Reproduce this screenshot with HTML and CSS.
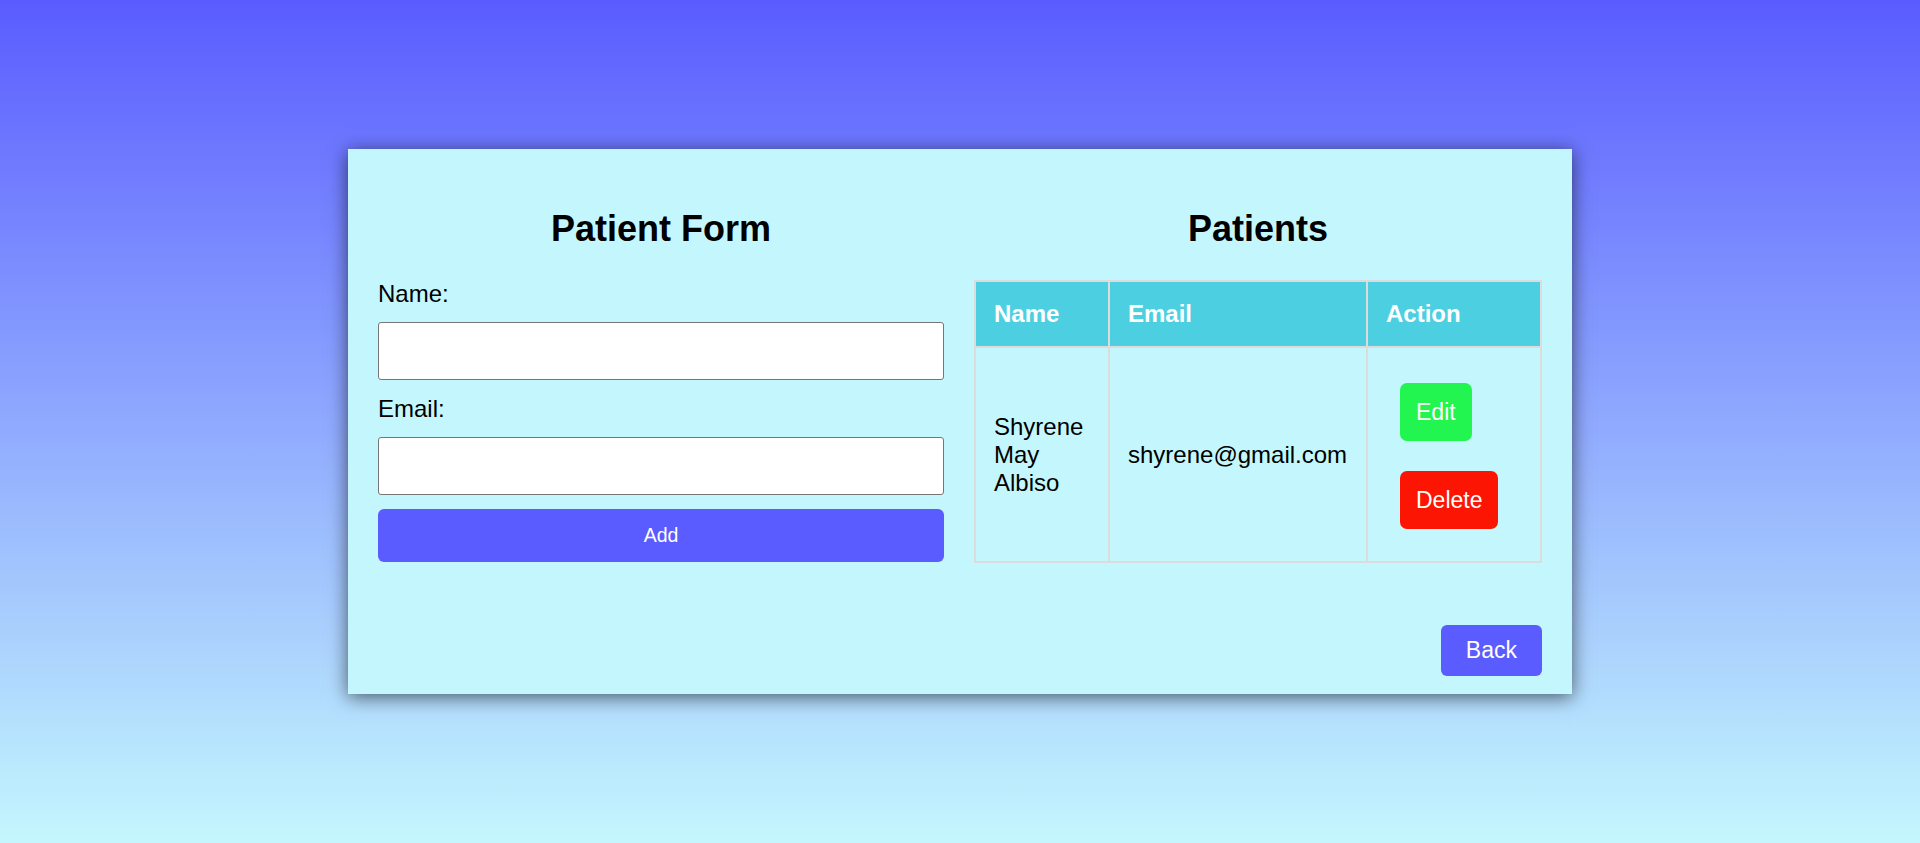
FILE: index.html
```html
<!DOCTYPE html>
<html lang="en">
<head>
<meta charset="utf-8">
<title>Patients</title>
<link rel="stylesheet" href="styles.css">
</head>
<body>
<div class="card">
  <div class="columns">
    <section class="col">
      <h2 class="title">Patient Form</h2>
      <form class="form">
        <label class="label" for="name">Name:</label>
        <input class="input" id="name" type="text">
        <label class="label" for="email">Email:</label>
        <input class="input" id="email" type="email">
        <button type="button" class="btn-add">Add</button>
      </form>
    </section>
    <section class="col">
      <h2 class="title">Patients</h2>
      <table class="table">
        <colgroup>
          <col class="c-name">
          <col class="c-email">
          <col class="c-action">
        </colgroup>
        <thead>
          <tr><th>Name</th><th>Email</th><th>Action</th></tr>
        </thead>
        <tbody>
          <tr>
            <td>Shyrene May Albiso</td>
            <td>shyrene@gmail.com</td>
            <td class="action-cell">
              <div class="actions">
                <button type="button" class="btn btn-edit">Edit</button>
                <button type="button" class="btn btn-delete">Delete</button>
              </div>
            </td>
          </tr>
        </tbody>
      </table>
    </section>
  </div>
  <div class="footer">
    <button type="button" class="btn btn-back">Back</button>
  </div>
</div>
</body>
</html>
```

FILE: styles.css
```css
* { box-sizing: border-box; }

html, body {
  margin: 0;
  height: 100%;
}

body {
  font-family: "Liberation Sans", Arial, sans-serif;
  background: linear-gradient(to bottom, #5a5cff 0%, #c4f7fd 100%);
  display: flex;
  align-items: center;
  justify-content: center;
  color: #000;
}

.card {
  width: 1224px;
  background: #c4f7fd;
  padding: 30px 30px 18px;
  box-shadow: 0 3px 18px rgba(0, 0, 0, 0.6);
}

.columns {
  display: grid;
  grid-template-columns: 1fr 1fr;
  column-gap: 30px;
  align-items: start;
}

.title {
  margin: 28px 0 29px;
  font-size: 36px;
  line-height: 44px;
  font-weight: bold;
  text-align: center;
}

.form {
  display: flex;
  flex-direction: column;
}

.label {
  font-size: 24px;
  line-height: 28px;
}

.input {
  height: 58px;
  margin: 14px 0 15px;
  border: 1px solid #767676;
  border-radius: 3px;
  background: #fff;
  font: inherit;
}

.input + .label + .input { margin-bottom: 14px; }

.btn-add {
  height: 53px;
  border: none;
  border-radius: 6px;
  background: #5a5cff;
  color: #fff;
  font-family: "Liberation Sans", Arial, sans-serif;
  font-size: 19.5px;
}

.table {
  width: 100%;
  border-collapse: collapse;
  table-layout: fixed;
  font-size: 24px;
}

.c-name { width: 134px; }
.c-email { width: 258px; }
.c-action { width: 174px; }

.table th,
.table td {
  border: 2px solid #dcdcdc;
  padding: 18px;
  text-align: left;
  line-height: 28px;
}

.table th {
  background: #4dcfe2;
  color: #fff;
  font-weight: bold;
}

.table td {
  vertical-align: middle;
}

.actions {
  display: flex;
  flex-direction: column;
  align-items: flex-start;
  gap: 30px;
  padding: 17px 0 14px 14px;
}

.btn {
  height: 58px;
  padding: 0 16px;
  border: none;
  border-radius: 7px;
  color: #fff;
  font-family: "Liberation Sans", Arial, sans-serif;
  font-size: 23px;
}

.btn-edit { background: #22f550; }
.btn-delete { background: #fc1502; }

.footer {
  display: flex;
  justify-content: flex-end;
  margin-top: 62px;
}

.btn-back {
  height: 51px;
  padding: 0 25px;
  border-radius: 6px;
  background: #5a5cff;
}
```
